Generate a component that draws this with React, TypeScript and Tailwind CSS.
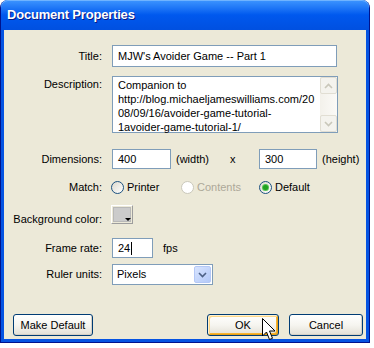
import React from "react";

function Radio({ checked, disabled, label }: { checked?: boolean; disabled?: boolean; label: string }) {
  return (
    <div className="flex items-center">
      <div
        className={
          "w-[13px] h-[13px] rounded-full border flex items-center justify-center " +
          (disabled
            ? "border-[#CAC8BB] bg-white"
            : "border-[#1C5180] bg-gradient-to-br from-[#DCD9CE] to-white")
        }
      >
        {checked && <div className="w-[5px] h-[5px] rounded-full bg-[#21A121] shadow-[0_0_0_1px_#55C455]" />}
      </div>
      <span className={"ml-[3px] " + (disabled ? "text-[#ACA899]" : "text-black")}>{label}</span>
    </div>
  );
}

function Chevron({ dir, color }: { dir: "up" | "down"; color: string }) {
  return (
    <svg width="9" height="6" viewBox="0 0 9 6">
      {dir === "up" ? (
        <path d="M1 5 L4.5 1.5 L8 5" fill="none" stroke={color} strokeWidth="1.6" />
      ) : (
        <path d="M1 1 L4.5 4.5 L8 1" fill="none" stroke={color} strokeWidth="1.6" />
      )}
    </svg>
  );
}

function XPButton({ children, w, def }: { children: React.ReactNode; w: string; def?: boolean }) {
  return (
    <div
      className={
        "h-[22px] rounded-[3px] border border-[#003C74] bg-gradient-to-b from-white via-[#F6F5F0] to-[#E3E0D6] flex items-center justify-center text-black " +
        w +
        (def
          ? " shadow-[inset_1px_1px_0_#FFF0CF,inset_-1px_-1px_0_#E5A01A,inset_2px_2px_0_#FDD889,inset_-2px_-2px_0_#F8B330]"
          : " shadow-[inset_-1px_-1px_0_#D6D0C5]")
      }
    >
      {children}
    </div>
  );
}

export default function App() {
  return (
    <div className="w-[374px] h-[348px] bg-white font-['Liberation_Sans',Arial,sans-serif] text-[11px] text-black relative">
      <div className="w-[370px] h-[343px] rounded-t-[8px] bg-[#0553E2] border-x border-b border-[#00138C] flex flex-col">
        <div className="h-[30px] rounded-t-[7px] bg-gradient-to-b from-[#3D95FF] via-[#0058EE] to-[#0050E0] flex items-center px-[6px] shadow-[inset_0_1px_0_#6FB3FF]">
          <span className="text-white font-bold text-[13px] tracking-[-0.2px] [text-shadow:1px_1px_0_#0A1883]">
            Document Properties
          </span>
        </div>
        <div className="flex-1 mx-[3px] mb-[3px] bg-[#ECE9D8] flex flex-col pt-[15px] pb-[3px]">
          {/* Title */}
          <div className="flex h-[22px] items-center">
            <div className="w-[98px] text-right">Title:</div>
            <div className="ml-[10px] w-[225px] h-[22px] border border-[#7F9DB9] bg-white flex items-center pl-[5px]">
              MJW's Avoider Game -- Part 1
            </div>
          </div>
          {/* Description */}
          <div className="flex mt-[9px]">
            <div className="w-[98px] text-right">Description:</div>
            <div className="ml-[10px] w-[226px] h-[57px] border border-[#7F9DB9] bg-white flex">
              <div className="flex-1 pl-[5px] pt-[1px] leading-[14px]">
                <div>Companion to</div>
                <div>http://blog.michaeljameswilliams.com/20</div>
                <div>08/09/16/avoider-game-tutorial-</div>
                <div>1avoider-game-tutorial-1/</div>
              </div>
              <div className="w-[17px] bg-gradient-to-r from-[#F3F1EB] to-[#FBFAF7] flex flex-col justify-between">
                <div className="h-[17px] rounded-[2px] border border-[#E1DED3] bg-[#F4F3EE] flex items-center justify-center">
                  <Chevron dir="up" color="#C9C7BA" />
                </div>
                <div className="h-[17px] rounded-[2px] border border-[#E1DED3] bg-[#F4F3EE] flex items-center justify-center">
                  <Chevron dir="down" color="#C9C7BA" />
                </div>
              </div>
            </div>
          </div>
          {/* Dimensions */}
          <div className="flex mt-[16px] h-[20px] items-center">
            <div className="w-[98px] text-right">Dimensions:</div>
            <div className="ml-[10px] w-[59px] h-[20px] border border-[#7F9DB9] bg-white flex items-center pl-[5px]">400</div>
            <span className="ml-[5px] w-[35px]">(width)</span>
            <span className="ml-[19px] w-[6px]">x</span>
            <div className="ml-[23px] w-[58px] h-[20px] border border-[#7F9DB9] bg-white flex items-center pl-[5px]">300</div>
            <span className="ml-[5px]">(height)</span>
          </div>
          {/* Match */}
          <div className="flex mt-[10px] h-[16px] items-center">
            <div className="w-[98px] text-right">Match:</div>
            <div className="ml-[9px] w-[70px]">
              <Radio label="Printer" />
            </div>
            <div className="w-[78px]">
              <Radio label="Contents" disabled />
            </div>
            <Radio label="Default" checked />
          </div>
          {/* Background color */}
          <div className="flex mt-[10px] h-[19px] items-center">
            <div className="w-[98px] text-right pt-[9px]">Background color:</div>
            <div className="ml-[9px] w-[22px] h-[19px] border border-t-white border-l-white border-r-[#9D9D9D] border-b-[#9D9D9D] bg-[#ECE9D8] p-[1px] relative">
              <div className="w-full h-full bg-[#CBCBCB] border border-[#B8B8B8]" />
              <svg className="absolute right-[1px] bottom-[1px]" width="6" height="4" viewBox="0 0 6 4">
                <path d="M0 0 H6 L3 3 Z" fill="#000" />
              </svg>
            </div>
          </div>
          {/* Frame rate */}
          <div className="flex mt-[14px] h-[20px] items-center">
            <div className="w-[98px] text-right">Frame rate:</div>
            <div className="ml-[10px] w-[41px] h-[20px] border border-[#7F9DB9] bg-white flex items-center pl-[5px]">
              24<span className="inline-block w-[1px] h-[13px] bg-black ml-[1px]" />
            </div>
            <span className="ml-[10px]">fps</span>
          </div>
          {/* Ruler units */}
          <div className="flex mt-[6px] h-[21px] items-center">
            <div className="w-[98px] text-right">Ruler units:</div>
            <div className="ml-[10px] w-[101px] h-[21px] border border-[#7F9DB9] bg-white flex items-center pl-[4px] pr-[1px]">
              <span className="flex-1">Pixels</span>
              <div className="w-[17px] h-[17px] rounded-[2px] border border-[#B4C8F6] bg-gradient-to-br from-[#D8E4FE] to-[#B3C9F8] flex items-center justify-center">
                <Chevron dir="down" color="#4D6185" />
              </div>
            </div>
          </div>
          {/* Buttons */}
          <div className="flex mt-auto items-center">
            <div className="ml-[9px]">
              <XPButton w="w-[80px]">Make Default</XPButton>
            </div>
            <div className="ml-[114px]">
              <XPButton w="w-[72px]" def>
                OK
              </XPButton>
            </div>
            <div className="ml-[10px]">
              <XPButton w="w-[74px]">Cancel</XPButton>
            </div>
          </div>
        </div>
      </div>
      <svg className="absolute left-[262px] top-[318px]" width="14" height="24" viewBox="0 0 14 24">
        <path d="M0.5 0.5 L0.5 18 L4.5 14 L7.5 21.5 L10.5 20.3 L7.5 13 L13 13 Z" fill="#fff" stroke="#000" strokeWidth="1" strokeLinejoin="miter" />
      </svg>
    </div>
  );
}
